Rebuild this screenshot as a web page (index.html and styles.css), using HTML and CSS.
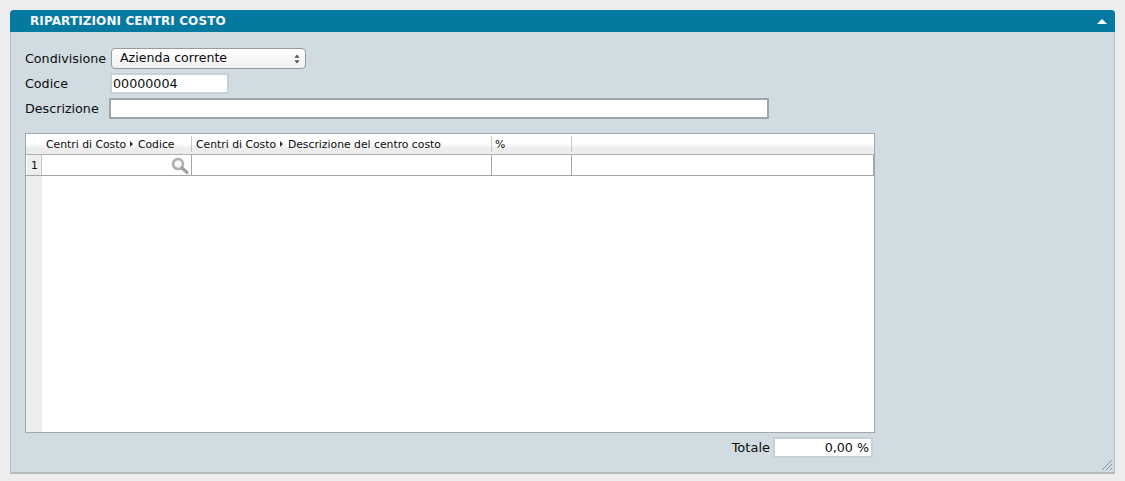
FILE: index.html
```html
<!DOCTYPE html>
<html lang="it">
<head>
<meta charset="utf-8">
<title>Ripartizioni Centri Costo</title>
<link rel="stylesheet" href="styles.css">
</head>
<body>
<section class="panel">
  <header class="panel-head">
    <h1 class="panel-title">RIPARTIZIONI CENTRI COSTO</h1>
    <span class="collapse"></span>
  </header>
  <div class="panel-body">
    <div class="form">
      <div class="row row-select">
        <label class="label">Condivisione</label>
        <div class="select">
          <span class="select-text">Azienda corrente</span>
          <svg class="updown" width="6" height="10" viewBox="0 0 6 10"><path d="M3 0.5 L5.6 3.8 H0.4 Z M3 9.5 L5.6 6.2 H0.4 Z" fill="#555"/></svg>
        </div>
      </div>
      <div class="row row-code">
        <label class="label">Codice</label>
        <div class="input input-code">00000004</div>
      </div>
      <div class="row row-desc">
        <label class="label">Descrizione</label>
        <div class="input input-desc"></div>
      </div>
    </div>
    <div class="grid">
      <div class="grid-head">
        <div class="hcell c-gutter"></div>
        <div class="hcell c-code">Centri di Costo <i class="arrow"></i> Codice</div>
        <div class="hcell c-descr">Centri di Costo <i class="arrow"></i> Descrizione del centro costo</div>
        <div class="hcell c-pct">%</div>
        <div class="hcell c-rest"></div>
      </div>
      <div class="grid-row">
        <div class="cell c-gutter num">1</div>
        <div class="cell c-code">
          <svg class="lens" width="18" height="17" viewBox="0 0 18 17"><circle cx="7" cy="7" r="5" fill="#f4f4f4" stroke="#b0b0b0" stroke-width="2.6"/><path d="M11 11 L16 15.5" stroke="#a0a0a0" stroke-width="3.2" stroke-linecap="round"/></svg>
        </div>
        <div class="cell c-descr"></div>
        <div class="cell c-pct"></div>
        <div class="cell c-rest"></div>
      </div>
      <div class="grid-empty"><div class="empty-gutter"></div></div>
    </div>
    <div class="total">
      <span class="total-label">Totale</span>
      <div class="input input-total">0,00 %</div>
    </div>
    <svg class="resize" width="12" height="12" viewBox="0 0 12 12"><path d="M1 11 L11 1 M5 11 L11 5 M9 11 L11 9" stroke="#8a9498" stroke-width="1" fill="none"/></svg>
  </div>
</section>
</body>
</html>
```
FILE: styles.css
```css
* { box-sizing: border-box; }
html, body { margin: 0; height: 100%; }
body {
  background: #ededed;
  padding: 10px 10px 7px 10px;
  font-family: "DejaVu Sans", sans-serif;
  font-size: 12px;
  color: #0c0c0c;
  overflow: hidden;
}
.panel {
  width: 1105px;
  height: 464px;
  display: flex;
  flex-direction: column;
  background: #d0dce2;
  border-radius: 4px 4px 0 0;
  border-left: 1px solid #b4bec3;
  border-right: 1px solid #b4bec3;
  border-bottom: 2px solid #b4bcc0;
}
.panel-head {
  height: 22px;
  margin: 0 -1px;
  background: #05799f;
  border-radius: 4px 4px 0 0;
  display: flex;
  align-items: center;
  justify-content: space-between;
  padding: 0 8px 0 20px;
}
.panel-title {
  margin: 0;
  font-size: 12px;
  font-weight: 700;
  color: #f4f8fa;
  letter-spacing: 0.1px;
}
.collapse {
  width: 0;
  height: 0;
  border-left: 5px solid transparent;
  border-right: 5px solid transparent;
  border-bottom: 5px solid #fff;
  margin-top: 1px;
}
.panel-body {
  position: relative;
  flex: 1;
  padding: 16px 0 0 14px;
  display: flex;
  flex-direction: column;
}
.form { display: flex; flex-direction: column; gap: 4px; }
.row { display: flex; align-items: center; height: 21px; }
.label { width: 85px; font-size: 12.7px; flex: none; }
.row-select .label { width: 86px; }
.row-desc .label { width: 84px; }
.select {
  width: 195px;
  height: 21px;
  background: linear-gradient(#fff, #f0f0f0);
  border: 1px solid #9a9a9a;
  border-radius: 4px;
  display: flex;
  align-items: center;
  justify-content: space-between;
  padding: 0 5px 0 8px;
  font-size: 12.6px;
}
.select-text { margin-top: -2px; }
.input {
  background: #fff;
  height: 21px;
  font-size: 12.7px;
  display: flex;
  align-items: center;
}
.input-code {
  width: 119px;
  border: 2px solid #c6d0d5;
  padding-left: 1px;
}
.input-desc {
  width: 660px;
  border: 2px solid #a2a6a8;
}
.grid {
  width: 850px;
  height: 300px;
  margin-top: 14px;
  background: #fff;
  border: 1px solid #a4a8aa;
  display: flex;
  flex-direction: column;
}
.grid-head {
  height: 21px;
  flex: none;
  display: flex;
  padding-top: 2px;
  background: linear-gradient(#fff 0, #fff 45%, #ececec 75%, #ececec 100%);
  border-bottom: 1px solid #b0b0b0;
  font-size: 10.8px;
}
.hcell {
  display: flex;
  align-items: center;
  height: 16px;
  padding-left: 4px;
  white-space: pre;
  flex: none;
  border-right: 1px solid #c4c4c4;
}
.c-gutter { width: 16px; }
.hcell.c-gutter { border-right: 0; }
.c-code { width: 150px; }
.c-descr { width: 300px; }
.c-pct { width: 80px; }
.hcell.c-pct { padding-left: 3px; }
.c-rest { width: 302px; }
.hcell.c-rest { border-right: 0; }
.arrow {
  display: inline-block;
  width: 0;
  height: 0;
  border-top: 3px solid transparent;
  border-bottom: 3px solid transparent;
  border-left: 3px solid #333;
  margin: 0 1px;
}
.grid-row {
  height: 21px;
  flex: none;
  display: flex;
  border-bottom: 1px solid #a4a4a4;
  border-right: 1px solid #a4a4a4;
}
.cell {
  flex: none;
  position: relative;
  border-right: 1px solid #a4a4a4;
}
.cell.c-rest { border-right: 0; width: 301px; }
.cell.num {
  background: #eee;
  font-size: 10.8px;
  display: flex;
  align-items: center;
  padding-left: 4px;
  border-left: 1px solid #fff;
  border-right: 1px solid #c4c4c4;
}
.lens { position: absolute; right: 2px; top: 2px; }
.grid-empty { flex: 1; display: flex; }
.empty-gutter { width: 16px; background: #eee; }
.total {
  display: flex;
  align-items: center;
  justify-content: flex-end;
  width: 848px;
  margin-top: 4px;
  gap: 3px;
}
.total-label { font-size: 13px; }
.input-total {
  width: 100px;
  border: 2px solid #c6d0d5;
  justify-content: flex-end;
  padding-right: 2px;
}
.resize { position: absolute; right: 1px; bottom: 1px; }
```
